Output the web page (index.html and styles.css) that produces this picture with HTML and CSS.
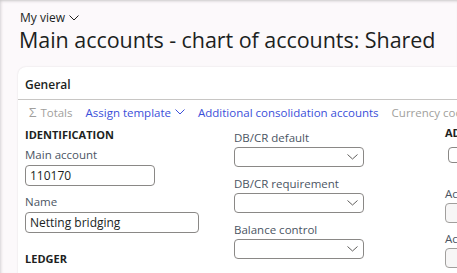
FILE: index.html
```html
<!DOCTYPE html>
<html lang="en">
  <head>
    <meta charset="UTF-8" />
    <title>Main accounts</title>
    <link rel="stylesheet" href="styles.css">
  </head>
  <body>
    <div class="workspace">
      <header class="page-head">
        <div class="view-picker">
          My view
          <svg class="chev" width="10" height="6" viewBox="0 0 10 6"><path d="M0.5 0.5 L5 5 L9.5 0.5" /></svg>
        </div>
        <h1>Main accounts - chart of accounts: Shared</h1>
      </header>

      <section class="card">
        <div class="card-head">General</div>

        <nav class="toolbar">
          <span class="tool disabled"><span class="sigma">&Sigma;</span> Totals</span>
          <span class="tool">
            Assign template
            <svg class="chev" width="10" height="6" viewBox="0 0 10 6"><path d="M0.5 0.5 L5 5 L9.5 0.5" /></svg>
          </span>
          <span class="tool">Additional consolidation accounts</span>
          <span class="tool disabled">Currency code</span>
        </nav>

        <div class="form-grid">
          <div class="col col-ident">
            <h2 class="group-title">IDENTIFICATION</h2>
            <div class="field">
              <label for="main-account">Main account</label>
              <input id="main-account" class="text-input short" type="text" value="110170" />
            </div>
            <div class="field">
              <label for="name">Name</label>
              <input id="name" class="text-input" type="text" value="Netting bridging" />
            </div>
            <h2 class="group-title ledger">LEDGER</h2>
          </div>

          <div class="col col-ledger">
            <div class="field">
              <label>DB/CR default</label>
              <div class="select"><svg class="chev" width="11" height="6" viewBox="0 0 11 6"><path d="M0.5 0.5 L5.5 5 L10.5 0.5" /></svg></div>
            </div>
            <div class="field">
              <label>DB/CR requirement</label>
              <div class="select"><svg class="chev" width="11" height="6" viewBox="0 0 11 6"><path d="M0.5 0.5 L5.5 5 L10.5 0.5" /></svg></div>
            </div>
            <div class="field">
              <label>Balance control</label>
              <div class="select"><svg class="chev" width="11" height="6" viewBox="0 0 11 6"><path d="M0.5 0.5 L5.5 5 L10.5 0.5" /></svg></div>
            </div>
          </div>

          <div class="col col-admin">
            <h2 class="group-title">ADMINISTRATION</h2>
            <div class="toggle-box"></div>
            <div class="field spaced">
              <label>Active from</label>
              <div class="text-input readonly"></div>
            </div>
            <div class="field">
              <label>Active to</label>
              <div class="text-input readonly"></div>
            </div>
          </div>
        </div>
      </section>
    </div>
  </body>
</html>
```

FILE: styles.css
```css
* {
  box-sizing: border-box;
  margin: 0;
  padding: 0;
}

html,
body {
  height: 100%;
  overflow: hidden;
}

body {
  font-family: "Open Sans", "Noto Sans", Arial, sans-serif;
  background-color: #fcf9fb;
  color: #201f1e;
}

.workspace {
  height: 100%;
  box-shadow: inset 0 3px 3px -2px #c8c6c8, inset 3px 0 3px -2px #d6d2d5;
}

/* page title block */
.page-head {
  padding: 10px 0 0 20px;
  height: 67px;
}

.view-picker {
  font-size: 12px;
  line-height: 16px;
  color: #201f1e;
  display: flex;
  align-items: center;
  gap: 4px;
}

.chev path {
  fill: none;
  stroke: currentColor;
  stroke-width: 1;
}

.page-head h1 {
  font-size: 21.5px;
  font-weight: 400;
  line-height: 28px;
  margin-left: -1px;
  white-space: nowrap;
  letter-spacing: -0.05px;
}

/* card */
.card {
  margin-left: 18px;
  background-color: #ffffff;
  border-radius: 8px 0 0 0;
  height: 206px;
  box-shadow: 0 0 2px rgba(0, 0, 0, 0.12);
}

.card-head {
  height: 33px;
  padding: 9px 0 0 7px;
  font-size: 12px;
  font-weight: 600;
  border-bottom: 1px solid #c8c6c4;
}

.toolbar {
  display: flex;
  gap: 13px;
  height: 24px;
  align-items: center;
  padding-left: 11px;
  font-size: 11.5px;
  white-space: nowrap;
  color: #3b4fd9;
}

.tool {
  display: flex;
  align-items: center;
  gap: 4px;
}

.tool.disabled {
  color: #a19f9d;
}

.sigma {
  font-size: 13px;
}

/* form columns */
.form-grid {
  display: grid;
  grid-template-columns: 209px 211px 60px;
  padding-left: 7px;
  white-space: nowrap;
}

.group-title {
  font-size: 11px;
  font-weight: 700;
  line-height: 20px;
  height: 20px;
  margin-top: 1px;
  color: #201f1e;
}

.group-title.ledger {
  margin-top: 16px;
}

.field label {
  display: block;
  font-size: 11.5px;
  line-height: 19px;
  height: 19px;
  color: #4b5563;
}

.col-ident .field {
  margin-bottom: 6px;
}

.col-ident .field label {
  height: 20px;
}

.text-input {
  display: block;
  width: 174px;
  height: 21px;
  border: 1px solid #8a8886;
  border-radius: 4px;
  padding: 0 4px;
  font-family: inherit;
  font-size: 12px;
  color: #201f1e;
  background-color: #ffffff;
}

.text-input.short {
  width: 130px;
}

.col-ledger {
  padding-top: 4px;
}

.col-ledger .field {
  margin-bottom: 7px;
}

.select {
  width: 130px;
  height: 20px;
  border: 1px solid #8a8886;
  border-radius: 4px;
  display: flex;
  justify-content: flex-end;
  align-items: center;
  padding-right: 5px;
  color: #605e5c;
}

.col-admin .group-title {
  margin-top: -1px;
}

.toggle-box {
  width: 20px;
  height: 16px;
  margin: 4px 0 0 3px;
  border: 1px solid #8a8886;
  border-radius: 4px;
}

.col-admin .field {
  margin-bottom: 6px;
}

.col-admin .field.spaced {
  margin-top: 21px;
}

.text-input.readonly {
  width: 40px;
  height: 20px;
  background-color: #f7f6f6;
  border-color: #a19f9d;
}
```
